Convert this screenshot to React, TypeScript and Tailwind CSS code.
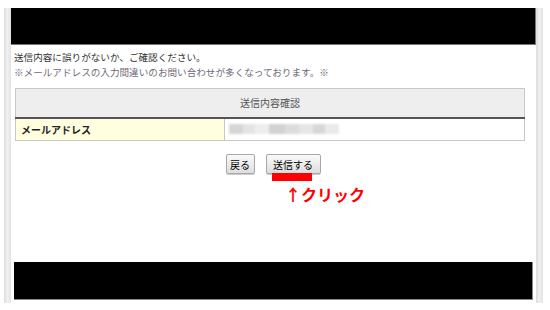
const jp = "font-['Noto_Sans_CJK_JP','Liberation_Sans',sans-serif]";

function SideStrip() {
  return <div className="w-[7px] bg-gradient-to-r from-[#dcdcdc] via-[#f1f1f1] to-[#e2e2e2]" />;
}

function Blurred() {
  return (
    <div className="flex items-center gap-0 blur-[1px]">
      <div className="h-[10px] w-[14px] bg-[#d6d6d6]" />
      <div className="h-[10px] w-[12px] bg-[#e4e4e4]" />
      <div className="h-[10px] w-[14px] bg-[#eeeeee]" />
      <div className="h-[10px] w-[16px] bg-[#d2d2d2]" />
      <div className="h-[10px] w-[14px] bg-[#dcdcdc]" />
      <div className="h-[10px] w-[14px] bg-[#e6e6e6]" />
      <div className="h-[10px] w-[12px] bg-[#d8d8d8]" />
      <div className="h-[10px] w-[14px] bg-[#eaeaea]" />
    </div>
  );
}

export default function App() {
  return (
    <div className={`h-[310px] w-[550px] bg-white ${jp}`}>
      <div className="ml-[4px] flex h-[303px] pt-[8px]">
        <SideStrip />
        <main className="flex w-[525px] flex-col">
          <div className="h-[37px] border-r border-b border-[#777] bg-black" />
          <div className="mt-[5px] pl-[3px] text-[9.6px] leading-[15px]">
            <p className="text-[#333]">送信内容に誤りがないか、ご確認ください。</p>
            <p className="text-[#6f6a78]">※メールアドレスの入力間違いのお問い合わせが多くなっております。※</p>
          </div>
          <table className="mt-[8px] ml-[4px] w-[510px] border-collapse text-[10px]">
            <tbody>
              <tr>
                <th
                  colSpan={2}
                  className="h-[29px] border border-b-2 border-[#c8c8c8] border-b-[#555] bg-[#eeeeee] text-center font-normal text-[#555]"
                >
                  送信内容確認
                </th>
              </tr>
              <tr>
                <td className="h-[23px] w-[209px] border border-[#c8c8c8] bg-[#ffffe0] pl-[5px] font-bold text-[#222]">
                  メールアドレス
                </td>
                <td className="border border-[#c8c8c8] bg-white pl-[4px]">
                  <Blurred />
                </td>
              </tr>
            </tbody>
          </table>
          <div className="relative mt-[13px] flex justify-center gap-[11px] pr-[1px] text-[10px] text-black">
            <button className="h-[20px] w-[29px] rounded-[2px] border border-[#a8a8a8] bg-gradient-to-b from-[#fafafa] to-[#dedede] shadow-[0_1px_0_#ccc]">
              戻る
            </button>
            <button className="h-[20px] w-[55px] rounded-[2px] border border-[#a8a8a8] bg-gradient-to-b from-[#fafafa] to-[#dedede] shadow-[0_1px_0_#ccc]">
              送信する
            </button>
            <div className="absolute top-[19px] left-[261px] h-[8px] w-[40px] bg-[#ff0000]" />
            <div className="absolute top-[28px] left-[274px] text-[16px] leading-[24px] font-bold text-[#ff0000]">
              ↑クリック
            </div>
          </div>
          <div className="mt-auto mx-[3px] mb-[3px] h-[38px] border-r border-b border-[#888] bg-black" />
        </main>
        <SideStrip />
      </div>
    </div>
  );
}
